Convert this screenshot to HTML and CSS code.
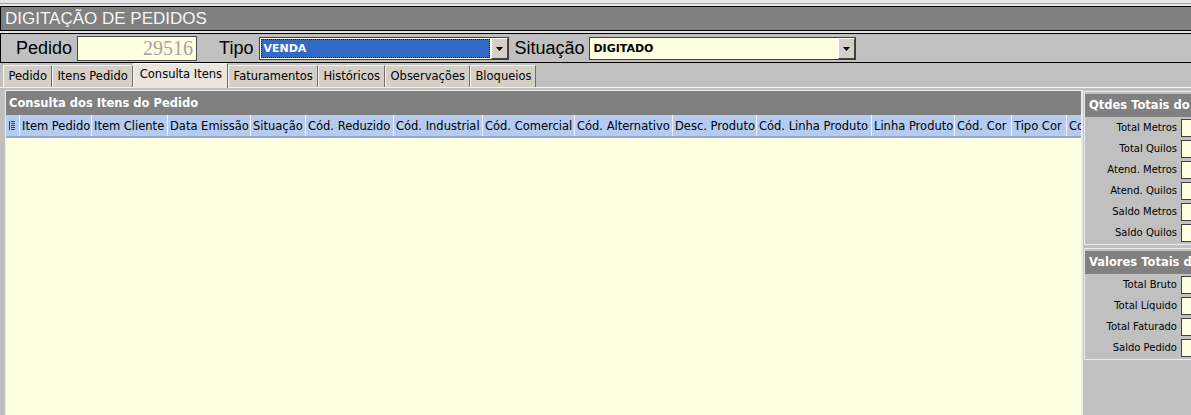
FILE: index.html
```
<!DOCTYPE html>
<html lang="pt-BR">
<head>
    <meta charset="UTF-8">
    <title>Digitação de Pedidos</title>
    <link rel="stylesheet" href="styles.css">
</head>
<body>

<div class="top-strip"></div>
<div class="title-bar">DIGITAÇÃO DE PEDIDOS</div>
<div class="title-gap"></div>

<!-- Cabecalho do pedido -->
<div class="header-row">
    <span class="big-label label-pedido">Pedido</span>
    <div class="field pedido-field">29516</div>
    <span class="big-label label-tipo">Tipo</span>
    <div class="combo combo-tipo">
        <span class="combo-value selected">VENDA</span>
        <span class="combo-btn"><svg width="7" height="4" viewBox="0 0 7 4"><path d="M0 0h7L3.5 4z" fill="#000"/></svg></span>
    </div>
    <span class="big-label label-situacao">Situação</span>
    <div class="combo combo-situacao">
        <span class="combo-value">DIGITADO</span>
        <span class="combo-btn"><svg width="7" height="4" viewBox="0 0 7 4"><path d="M0 0h7L3.5 4z" fill="#000"/></svg></span>
    </div>
</div>

<!-- Abas -->
<div class="tabs">
    <div class="tab">Pedido</div>
    <div class="tab">Itens Pedido</div>
    <div class="tab active">Consulta Itens</div>
    <div class="tab">Faturamentos</div>
    <div class="tab">Históricos</div>
    <div class="tab">Observações</div>
    <div class="tab">Bloqueios</div>
</div>

<div class="tab-body">
    <div class="main-panel">
        <div class="panel-title">Consulta dos Itens do Pedido</div>
        <div class="grid-header">
            <div class="col col-icon">
                <svg width="6" height="9" viewBox="0 0 6 9">
                    <rect x="0" y="0" width="1" height="9" fill="#2a3a6a"/>
                    <rect x="2" y="0" width="4" height="1" fill="#2a3a6a"/>
                    <rect x="2" y="2" width="4" height="1" fill="#2a3a6a"/>
                    <rect x="2" y="4" width="4" height="1" fill="#2a3a6a"/>
                    <rect x="2" y="6" width="4" height="1" fill="#2a3a6a"/>
                    <rect x="2" y="8" width="4" height="1" fill="#2a3a6a"/>
                </svg>
            </div>
            <div class="col">Item Pedido</div>
            <div class="col">Item Cliente</div>
            <div class="col">Data Emissão</div>
            <div class="col">Situação</div>
            <div class="col">Cód. Reduzido</div>
            <div class="col">Cód. Industrial</div>
            <div class="col">Cód. Comercial</div>
            <div class="col">Cód. Alternativo</div>
            <div class="col">Desc. Produto</div>
            <div class="col">Cód. Linha Produto</div>
            <div class="col">Linha Produto</div>
            <div class="col">Cód. Cor</div>
            <div class="col">Tipo Cor</div>
            <div class="col last">Co</div>
        </div>
        <div class="grid-body"></div>
    </div>

    <!-- Totais -->
    <div class="side">
        <div class="group">
            <div class="group-title">Qtdes Totais do</div>
            <div class="total-row"><span class="total-label">Total Metros</span><span class="total-box"></span></div>
            <div class="total-row"><span class="total-label">Total Quilos</span><span class="total-box"></span></div>
            <div class="total-row"><span class="total-label">Atend. Metros</span><span class="total-box"></span></div>
            <div class="total-row"><span class="total-label">Atend. Quilos</span><span class="total-box"></span></div>
            <div class="total-row"><span class="total-label">Saldo Metros</span><span class="total-box"></span></div>
            <div class="total-row"><span class="total-label">Saldo Quilos</span><span class="total-box"></span></div>
        </div>
        <div class="group second">
            <div class="group-title">Valores Totais d</div>
            <div class="total-row"><span class="total-label">Total Bruto</span><span class="total-box"></span></div>
            <div class="total-row"><span class="total-label">Total Líquido</span><span class="total-box"></span></div>
            <div class="total-row"><span class="total-label">Total Faturado</span><span class="total-box"></span></div>
            <div class="total-row"><span class="total-label">Saldo Pedido</span><span class="total-box"></span></div>
        </div>
    </div>
</div>

</body>
</html>
```

FILE: styles.css
```
/* Base */
body {
    margin: 0;
    width: 1191px;
    height: 415px;
    overflow: hidden;
    background-color: #c0c0c0;
    font-family: 'DejaVu Sans', sans-serif;
    display: flex;
    flex-direction: column;
}

.top-strip {
    height: 6px;
    flex: none;
    background: linear-gradient(#e6e6e6 0 3px, #a4a4a4 3px 4px, #e6e6e6 4px);
}

/* Title */
.title-bar {
    flex: none;
    height: 23px;
    line-height: 23px;
    border-top: 1px solid #000;
    border-bottom: 1px solid #000;
    border-left: 1px solid #000;
    background-color: #808080;
    color: #f6f6f6;
    font-family: 'Liberation Sans', Arial, sans-serif;
    font-size: 17px;
    padding-left: 4px;
    white-space: nowrap;
}

.title-gap {
    flex: none;
    height: 2px;
    background-color: #e4e4e4;
}

/* Header row */
.header-row {
    flex: none;
    height: 28px;
    border-top: 1px solid #000;
    border-bottom: 1px solid #000;
    border-left: 1px solid #000;
    display: flex;
    align-items: center;
    padding-left: 15px;
}

.big-label {
    font-family: 'Liberation Sans', Arial, sans-serif;
    font-size: 18px;
    color: #000;
    white-space: nowrap;
}

.label-pedido {
    margin-right: 5px;
}

.label-tipo {
    margin-left: 22px;
    margin-right: 6px;
}

.label-situacao {
    margin-left: 5px;
    margin-right: 5px;
}

.field {
    box-sizing: border-box;
    width: 120px;
    height: 25px;
    margin-top: 1px;
    border: 1px solid #4a4a4a;
    background-color: #ffffe1;
    font-family: 'Liberation Serif', 'Times New Roman', serif;
    font-size: 20px;
    line-height: 23px;
    color: #a4a4a4;
    text-align: right;
    padding-right: 3px;
}

.combo {
    box-sizing: border-box;
    height: 23px;
    margin-top: 1px;
    border: 1px solid #404040;
    background-color: #ffffe1;
    display: flex;
}

.combo-tipo {
    width: 250px;
}

.combo-situacao {
    width: 267px;
}

.combo-value {
    flex: 1;
    font-size: 11px;
    font-weight: bold;
    line-height: 21px;
    padding-left: 3px;
    color: #000;
}

.combo-value.selected {
    margin: 1px;
    line-height: 17px;
    padding-left: 1px;
    background-color: #316ac5;
    color: #fff;
    border: 1px dotted #1a1a1a;
}

.combo-btn {
    box-sizing: border-box;
    width: 17px;
    background-color: #d4d0c8;
    border-style: solid;
    border-width: 1px;
    border-color: #fff #404040 #404040 #fff;
    display: flex;
    align-items: center;
    justify-content: center;
}

/* Tabs */
.tabs {
    flex: none;
    height: 24px;
    display: flex;
    align-items: flex-end;
    padding-left: 3px;
}

.tab {
    box-sizing: border-box;
    height: 22px;
    line-height: 20px;
    padding: 0 4px 0 4.5px;
    font-size: 11.5px;
    color: #000;
    white-space: nowrap;
    background-color: #d4d0c8;
    border-top: 1px solid #f4f4f4;
    border-left: 1px solid #f4f4f4;
    border-right: 1px solid #6e6e6e;
}

.tab.active {
    height: 25px;
    line-height: 20px;
    margin-bottom: -1px;
    padding: 0 5px 3px 6px;
    background-color: #e8e6de;
    position: relative;
}

/* Tab body */
.tab-body {
    flex: 1;
    min-height: 0;
    border-top: 1px solid #f2f2f2;
    padding: 2px 0 0 5px;
    display: flex;
}

.main-panel {
    flex: none;
    width: 1075px;
    border-top: 1px solid #ececec;
    border-left: 1px solid #ececec;
    display: flex;
    flex-direction: column;
}

.panel-title {
    height: 24px;
    line-height: 24px;
    background-color: #808080;
    color: #fff;
    font-size: 11.5px;
    font-weight: bold;
    padding-left: 3px;
}

.grid-header {
    display: grid;
    grid-template-columns: 14px 72px 76px 83px 55px 88px 89px 92px 98px 84px 115px 83px 57px 55px 1fr;
    height: 21px;
    background-color: #b5cbef;
    border-bottom: 2px solid #8fa8d6;
}

.col {
    border-right: 1px solid #eef3ff;
    font-size: 11.5px;
    line-height: 23px;
    padding-left: 2px;
    color: #000;
    white-space: nowrap;
    overflow: hidden;
}

.col-icon {
    display: flex;
    align-items: center;
    padding-left: 3px;
}

.col.last {
    border-right: none;
}

.grid-body {
    flex: 1;
    background-color: #ffffe1;
}

/* Side totals */
.side {
    flex: 1;
    min-width: 0;
    overflow: hidden;
    border-left: 2px solid #ececec;
    padding: 1px 0 0 1px;
    display: flex;
    flex-direction: column;
    gap: 3px;
}

.group {
    border-top: 1px solid #ececec;
    border-left: 1px solid #ececec;
    border-bottom: 1px solid #ececec;
    padding: 2px 0 1px 0;
}

.group-title {
    height: 23px;
    line-height: 23px;
    background-color: #808080;
    color: #fff;
    font-size: 11.5px;
    font-weight: bold;
    padding-left: 4px;
    white-space: nowrap;
    overflow: hidden;
}

.total-row {
    height: 21px;
    display: flex;
    align-items: center;
}

.total-label {
    flex: none;
    width: 92px;
    text-align: right;
    font-size: 10px;
    color: #000;
    white-space: nowrap;
}

.total-box {
    flex: none;
    box-sizing: border-box;
    margin-left: 4px;
    width: 40px;
    height: 18px;
    border: 1px solid #404040;
    background-color: #ffffe1;
}
```
